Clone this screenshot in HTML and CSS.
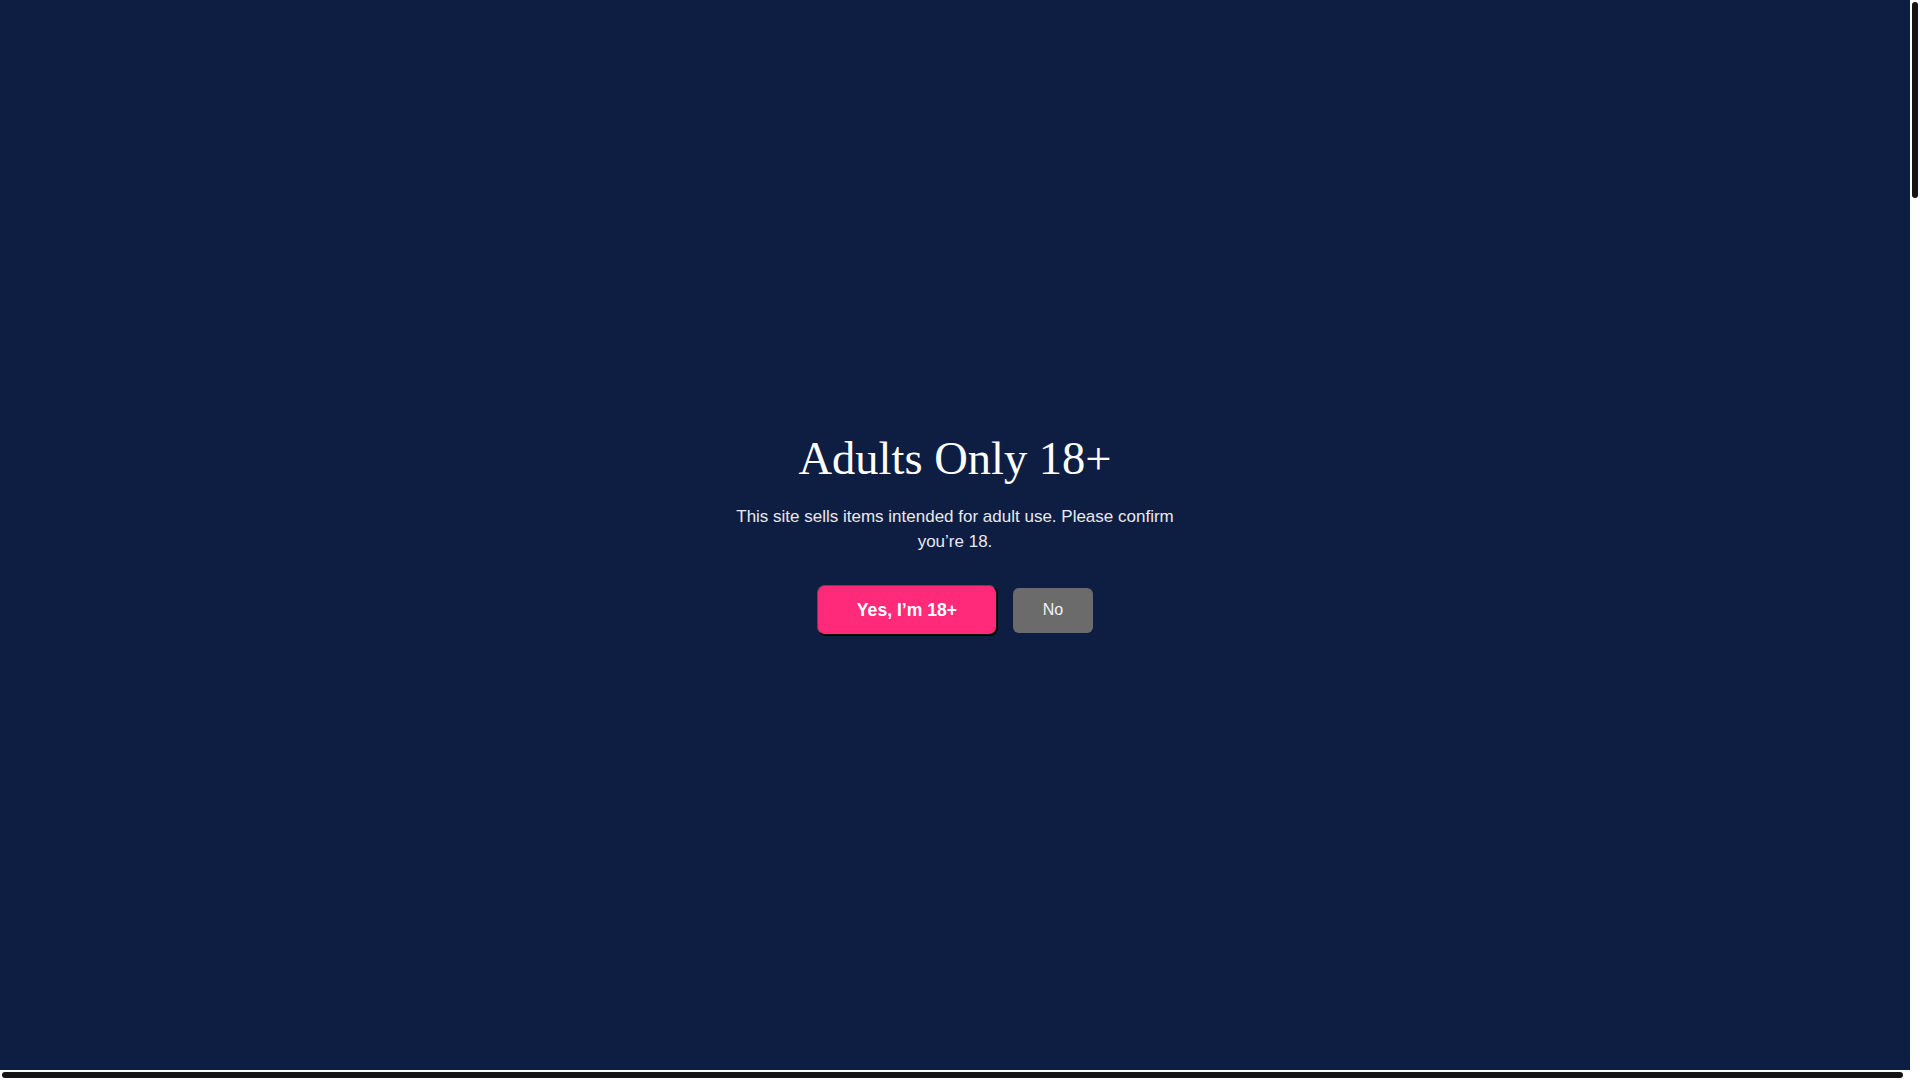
FILE: index.html
```html
<!DOCTYPE html>
<html lang="en">
<head>
<meta charset="utf-8">
<title>Adults Only 18+</title>
<link rel="stylesheet" href="styles.css">
</head>
<body>
<div class="frame">
  <main class="age-gate">
    <div class="gate-box">
      <h1 class="gate-title">Adults Only 18+</h1>
      <p class="gate-text">This site sells items intended for adult use. Please confirm you’re 18.</p>
      <div class="gate-actions">
        <button class="btn btn-yes" type="button">Yes, I’m 18+</button>
        <button class="btn btn-no" type="button">No</button>
      </div>
    </div>
  </main>
  <div class="vscroll"><div class="vthumb"></div></div>
  <div class="hscroll"><div class="hthumb"></div></div>
  <div class="corner"></div>
</div>
</body>
</html>
```

FILE: styles.css
```css
html, body {
  margin: 0;
  height: 100%;
  overflow: hidden;
  background: #ffffff;
}
body {
  font-family: "Liberation Sans", Arial, sans-serif;
}
.frame {
  height: 100vh;
  display: grid;
  grid-template-columns: 1fr 10px;
  grid-template-rows: 1fr 10px;
}
.age-gate {
  background: #0e1e42;
  display: flex;
  align-items: center;
  justify-content: center;
}
.vscroll, .hscroll, .corner {
  background: #ffffff;
}
.vscroll {
  padding: 2px;
  box-sizing: border-box;
}
.vthumb {
  height: 196px;
  background: #141414;
  border-radius: 3px;
}
.hscroll {
  padding: 2px 7px 2px 2px;
  box-sizing: border-box;
}
.hthumb {
  height: 6px;
  background: #141414;
  border-radius: 3px;
}
.gate-box {
  width: 450px;
  padding-bottom: 3px;
  display: flex;
  flex-direction: column;
  align-items: center;
  text-align: center;
}
.gate-title {
  margin: 0;
  font-family: "Liberation Serif", "Times New Roman", serif;
  font-weight: 400;
  font-size: 46.5px;
  line-height: 53px;
  color: #ffffff;
}
.gate-text {
  margin: 20px 0 0;
  font-size: 17px;
  line-height: 24.5px;
  color: #e8e9ef;
}
.gate-actions {
  margin-top: 31px;
  display: flex;
  align-items: center;
  gap: 16px;
}
.btn {
  font-family: "Liberation Sans", Arial, sans-serif;
  color: #ffffff;
  cursor: pointer;
  padding: 0;
}
.btn-yes {
  width: 180px;
  height: 50px;
  background: #ff2a7a;
  border: 1px solid #505050;
  border-right-color: #111111;
  border-bottom-color: #111111;
  border-radius: 8px;
  box-shadow: 1px 1px 0 #000000;
  font-weight: 700;
  font-size: 17.6px;
}
.btn-no {
  width: 80px;
  height: 45px;
  background: #6b6b6b;
  border: none;
  border-radius: 6px;
  font-size: 16px;
  color: #f2f2f2;
}
```
